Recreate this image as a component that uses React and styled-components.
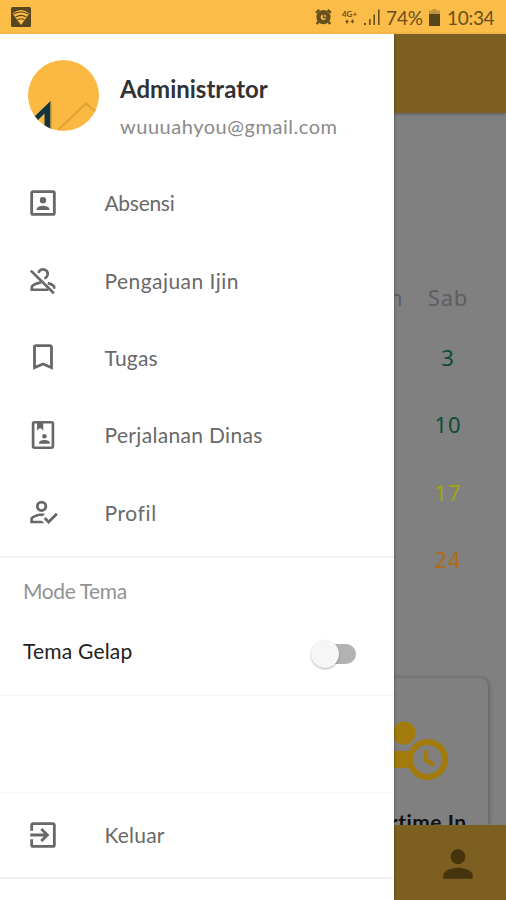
import React from 'react';
import styled, { createGlobalStyle } from 'styled-components';
import { MdPerson } from 'react-icons/md';

const menu = [
    { id: 'absensi', label: 'Absensi', icon: 'accountBox', spacing: '-0.3px' },
    { id: 'ijin', label: 'Pengajuan Ijin', icon: 'accountOff', spacing: '0.45px' },
    { id: 'tugas', label: 'Tugas', icon: 'bookmark', spacing: '0.2px' },
    { id: 'dinas', label: 'Perjalanan Dinas', icon: 'bookAccount', spacing: '0.33px' },
    { id: 'profil', label: 'Profil', icon: 'accountCheck', spacing: '0.6px' },
];

const saturdays = [
    { day: 3, color: '#0d4c34' },
    { day: 10, color: '#0d4c34' },
    { day: 17, color: '#a2a512' },
    { day: 24, color: '#b06c14' },
];

const paths = {
    accountBox: 'M19 19H5V5H19M19 3H5C3.89 3 3 3.9 3 5V19A2 2 0 0 0 5 21H19A2 2 0 0 0 21 19V5A2 2 0 0 0 19 3M16.5 16.25C16.5 14.75 13.5 14 12 14S7.5 14.75 7.5 16.25V17H16.5M12 12.25A2.25 2.25 0 1 0 9.75 10A2.25 2.25 0 0 0 12 12.25Z',
    bookmark: 'M17 18L12 15.82L7 18V5H17M17 3H7A2 2 0 0 0 5 5V21L12 18L19 21V5C19 3.89 18.1 3 17 3Z',
    accountCheck: 'M21.1 12.5L22.5 13.91L15.97 20.5L12.5 17L13.9 15.59L15.97 17.67L21.1 12.5M11 4A4 4 0 0 1 15 8A4 4 0 0 1 11 12A4 4 0 0 1 7 8A4 4 0 0 1 11 4M11 6A2 2 0 0 0 9 8A2 2 0 0 0 11 10A2 2 0 0 0 13 8A2 2 0 0 0 11 6M11 13C11.68 13 12.5 13.09 13.41 13.26L11.74 14.93L11 14.9C8.03 14.9 4.9 16.36 4.9 17V18.1H11.1L13 20H3V17C3 14.34 8.33 13 11 13Z',
    exit: 'M19 3H5C3.89 3 3 3.89 3 5V9H5V5H19V19H5V15H3V19A2 2 0 0 0 5 21H19A2 2 0 0 0 21 19V5C21 3.89 20.1 3 19 3M10.08 15.58L11.5 17L16.5 12L11.5 7L10.08 8.41L12.67 11H3V13H12.67L10.08 15.58Z',
};

const MenuIcon = ({ name }) => (
    <Icon viewBox="0 0 24 24">
        {paths[name] && <path d={paths[name]} />}
        {name === 'accountOff' && (
            <g fill="none" stroke="currentColor" strokeWidth="1.9">
                <path d="M8.8 7A3.3 3.3 0 1 1 13 10.9" />
                <path d="M10.6 13.9C7.6 14.2 4.1 15.6 4.1 17.1V18.9H15.8" />
                <path d="M15.4 14.2C18 14.9 19.9 16 19.9 17.2V18.2" />
                <path d="M3.4 5.4L19.7 21.4" />
            </g>
        )}
        {name === 'bookAccount' && (
            <>
                <rect x="5" y="3" width="14" height="18" rx="1" fill="none" stroke="currentColor" strokeWidth="1.9" />
                <path d="M7.8 3H12.2V8.8L10 7L7.8 8.8Z" />
                <circle cx="13" cy="12.9" r="1.6" />
                <path d="M9.2 18.2V17.5C9.2 16.2 11.4 15.6 13 15.6S16.8 16.2 16.8 17.5V18.2Z" />
            </>
        )}
    </Icon>
);

const App = () => (
    <Screen>
        <GlobalStyle />
        <StatusBar>
            <svg width="20" height="20" viewBox="0 0 20 20">
                <rect width="20" height="20" rx="1.5" fill="#59461f" />
                <path d="M1.5 6.5Q10 -0.5 18.5 6.5L10 18Z" fill="#fcbc48" />
                <path d="M2.5 7.3Q10 2.6 17.5 7.3M4.5 10Q10 6.8 15.5 10M6.5 12.8Q10 10.8 13.5 12.8" fill="none" stroke="#59461f" strokeWidth="1.1" />
            </svg>
            <StatusGroup>
                <svg width="17" height="18" viewBox="0 0 18 18" fill="none" stroke="#67501f">
                    <path d="M1.2 4.6L4.6 1.4M13.4 1.4L16.8 4.6M3.8 14L1.8 16.4M14.2 14L16.2 16.4" strokeWidth="2.6" />
                    <circle cx="9" cy="9.2" r="5.2" strokeWidth="4.6" />
                    <path d="M9 6V9.5H12" strokeWidth="1.4" />
                </svg>
                <Network>
                    4G+
                    <svg width="10" height="5" viewBox="0 0 10 5" fill="#67501f">
                        <path d="M0 3L2 0.5L4 3H2.8V4.5H1.2V3ZM5.5 2L7.5 4.5L9.5 2H8.3V0.5H6.7V2Z" />
                    </svg>
                </Network>
                <svg width="18" height="17" viewBox="0 0 18 17" fill="#67501f">
                    <path d="M1 14H3V16H1ZM6 10H7.6V16H6ZM10.4 5.5H12V16H10.4ZM15 0.5H16.6V16H15Z" />
                </svg>
                <Percent>74%</Percent>
                <svg width="11" height="17" viewBox="0 0 11 17">
                    <path d="M3.5 0H7.5V1.6H11V6H0V1.6H3.5Z" fill="#bf9440" />
                    <path d="M0 5H11V17H0Z" fill="#59461f" />
                </svg>
                <Clock>10:34</Clock>
            </StatusGroup>
        </StatusBar>

        <Stage>
            <AppBar />
            <Calendar>
                <Weekday>Jum</Weekday>
                <Weekday>Sab</Weekday>
                {saturdays.map(({ day, color }) => (
                    <Day key={day} $color={color}>{day}</Day>
                ))}
            </Calendar>
            <Shortcut>
                <svg width="80" height="64" viewBox="0 0 80 64">
                    <circle cx="36" cy="13" r="11.5" fill="#a27b0c" />
                    <path d="M8 48V44Q8 31 23 31H48V48Z" fill="#a27b0c" />
                    <circle cx="59.5" cy="39.5" r="17.5" fill="#808080" stroke="#a27b0c" strokeWidth="6" />
                    <path d="M58 30.5V40L66 45" fill="none" stroke="#a27b0c" strokeWidth="4.4" />
                </svg>
                <ShortcutLabel>Overtime In</ShortcutLabel>
            </Shortcut>
            <BottomNav>
                <MdPerson size={44} />
            </BottomNav>

            <Drawer>
                <Account>
                    <svg width="71" height="71" viewBox="0 0 71 71">
                        <clipPath id="avatar"><circle cx="35.5" cy="35.5" r="35.5" /></clipPath>
                        <g clipPath="url(#avatar)">
                            <rect width="71" height="71" fill="#fbb941" />
                            <path d="M5 58L22.5 41V71H16.5V53.5L8 62Z" fill="#12353f" />
                            <path d="M22.8 42V71" stroke="#a88b48" strokeWidth="1.4" />
                            <path d="M30 70L58 43.5L68 52" fill="none" stroke="#e0a433" strokeWidth="2.2" />
                            <path d="M24 14L34 10L46 12M10 22H12M51 16L62 23" fill="none" stroke="#f6b955" strokeWidth="1.2" />
                        </g>
                    </svg>
                    <AccountText>
                        <Name>Administrator</Name>
                        <Email>wuuuahyou@gmail.com</Email>
                    </AccountText>
                </Account>
                <Menu>
                    {menu.map(item => (
                        <MenuItem key={item.id} $spacing={item.spacing}>
                            <MenuIcon name={item.icon} />
                            {item.label}
                        </MenuItem>
                    ))}
                </Menu>
                <Theme>
                    <ThemeTitle>Mode Tema</ThemeTitle>
                    <ThemeRow>
                        <ThemeLabel>Tema Gelap</ThemeLabel>
                        <Track><Thumb /></Track>
                    </ThemeRow>
                </Theme>
                <Footer>
                    <MenuItem $spacing="0.2px">
                        <MenuIcon name="exit" />
                        Keluar
                    </MenuItem>
                </Footer>
            </Drawer>
        </Stage>
    </Screen>
)

const GlobalStyle = createGlobalStyle`
    * {
        box-sizing: border-box;
    }
    body {
        margin: 0;
    }
`

const Screen = styled.div`
    display: flex;
    flex-direction: column;
    width: 506px;
    height: 900px;
    overflow: hidden;
    background: #808080;
    font-family: Lato, 'Open Sans', sans-serif;
`

const StatusBar = styled.div`
    display: flex;
    flex: none;
    justify-content: space-between;
    align-items: center;
    height: 34px;
    padding: 0 12px 0 11px;
    background: #fcbc48;
    color: #67501f;
`

const StatusGroup = styled.div`
    display: flex;
    align-items: center;
    font-size: 19px;
    white-space: nowrap;
`

const Network = styled.span`
    display: flex;
    flex-direction: column;
    align-items: center;
    width: 17px;
    margin: 0 5px 0 9px;
    font-size: 8px;
    font-weight: bold;
    line-height: 9px;
`

const Percent = styled.span`
    width: 38px;
    margin: 0 5px 0 5px;
    letter-spacing: -0.1px;
`

const Clock = styled.span`
    width: 47px;
    margin-left: 7px;
    letter-spacing: -0.3px;
`

const Stage = styled.div`
    display: flex;
    flex: 1;
    flex-direction: column;
    min-height: 0;
    position: relative;
`

const AppBar = styled.div`
    flex: none;
    height: 79px;
    background: #7d5f22;
    box-shadow: 0 1px 3px rgba(0,0,0,0.3);
`

const Calendar = styled.div`
    display: grid;
    flex: none;
    grid-template-columns: 66px 66px;
    grid-template-rows: 52px repeat(4, 67.5px);
    justify-content: end;
    align-items: center;
    height: 539px;
    padding: 158px 25px 0 0;
    font-family: 'Noto Sans', sans-serif;
    font-size: 22px;
    text-align: center;
`

const Weekday = styled.span`
    color: #5b5e63;
    letter-spacing: 0.8px;
`

const Day = styled.span`
    grid-column: 2;
    color: ${p => p.$color};
    letter-spacing: 1px;
`

const Shortcut = styled.div`
    display: flex;
    flex: none;
    flex-direction: column;
    align-items: center;
    align-self: flex-end;
    width: 160px;
    height: 147px;
    margin: 26px 18px 0 0;
    padding-top: 42px;
    overflow: hidden;
    border-radius: 8px 8px 0 0;
    background: #808080;
    box-shadow: 1px 0 4px rgba(0,0,0,0.28);

    > * {
        flex: none;
    }
`

const ShortcutLabel = styled.span`
    margin-top: 24px;
    color: #111;
    font-size: 21px;
    font-weight: bold;
    line-height: 28px;
    letter-spacing: 0.5px;
    white-space: nowrap;
`

const BottomNav = styled.div`
    display: flex;
    flex: 1;
    justify-content: flex-end;
    align-items: center;
    padding: 2px 26px 0 0;
    background: #7d5f22;
    color: #46350c;
    z-index: 1;
`

const Drawer = styled.aside`
    display: flex;
    flex-direction: column;
    position: absolute;
    top: 0;
    bottom: 0;
    left: 0;
    z-index: 2;
    width: 394px;
    background: white;
    box-shadow: 0 0 3px rgba(0,0,0,0.4);
    clip-path: inset(0 -4px 0 0);
`

const Account = styled.div`
    display: flex;
    gap: 21px;
    height: 130px;
    padding: 26px 0 0 28px;
`

const AccountText = styled.div`
    display: flex;
    flex-direction: column;
    padding-top: 14px;
`

const Name = styled.span`
    color: #333;
    font-size: 24px;
    font-weight: bold;
    line-height: 30px;
`

const Email = styled.span`
    margin-top: 8px;
    color: #8a8a8a;
    font-size: 20px;
    line-height: 28px;
    letter-spacing: 0.53px;
`

const Menu = styled.nav`
    height: 392px;
`

const MenuItem = styled.div`
    display: flex;
    align-items: center;
    gap: 45px;
    height: 77.4px;
    padding-left: 25.5px;
    color: #696969;
    font-size: 21px;
    letter-spacing: ${p => p.$spacing};
`

const Icon = styled.svg`
    flex: none;
    width: 34px;
    height: 34px;
    color: #686868;
    fill: currentColor;
`

const Theme = styled.section`
    height: 140px;
    padding: 20px 38px 0 23px;
    border-top: 2px solid #f2f2f2;
    border-bottom: 2px solid #f7f7f7;
`

const ThemeTitle = styled.div`
    color: #929292;
    font-size: 21px;
    line-height: 26px;
    letter-spacing: -0.4px;
`

const ThemeRow = styled.div`
    display: flex;
    justify-content: space-between;
    height: 70px;
    padding-top: 33px;
`

const ThemeLabel = styled.span`
    color: #222;
    font-size: 21px;
    line-height: 28px;
    letter-spacing: 0.2px;
`

const Track = styled.div`
    display: flex;
    align-items: center;
    width: 42px;
    height: 20px;
    margin-top: 7px;
    border-radius: 10px;
    background: #b2b2b2;
`

const Thumb = styled.span`
    flex: none;
    width: 28px;
    height: 28px;
    margin-left: -3px;
    border-radius: 50%;
    background: #f6f6f6;
    box-shadow: 0 1px 2px rgba(0,0,0,0.3);
`

const Footer = styled.div`
    height: 87px;
    margin-top: 96px;
    padding-top: 3px;
    border-top: 1px solid #f8f8f8;
    border-bottom: 2px solid #f2f2f2;
`

export default App;
